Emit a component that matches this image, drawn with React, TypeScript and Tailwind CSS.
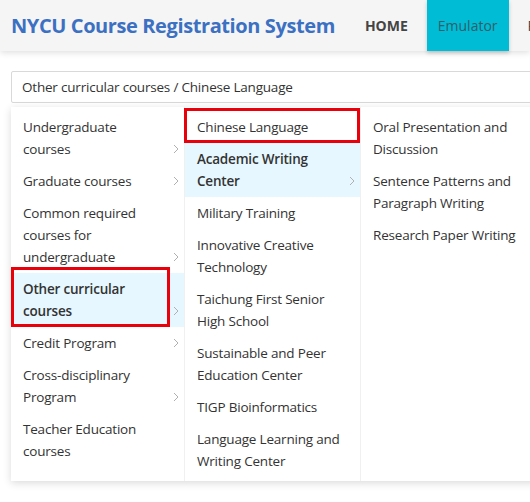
import React from 'react';

type Item = { lines: string[]; arrow?: boolean; active?: boolean; bold?: boolean; mark?: 'col1' | 'col2' };

const col1: Item[] = [
  { lines: ['Undergraduate', 'courses'], arrow: true },
  { lines: ['Graduate courses'], arrow: true },
  { lines: ['Common required', 'courses for', 'undergraduate'], arrow: true },
  { lines: ['Other curricular', 'courses'], arrow: true, active: true, bold: true, mark: 'col1' },
  { lines: ['Credit Program'], arrow: true },
  { lines: ['Cross-disciplinary', 'Program'], arrow: true },
  { lines: ['Teacher Education', 'courses'] },
];

const col2: Item[] = [
  { lines: ['Chinese Language'], mark: 'col2' },
  { lines: ['Academic Writing', 'Center'], arrow: true, active: true, bold: true },
  { lines: ['Military Training'] },
  { lines: ['Innovative Creative', 'Technology'] },
  { lines: ['Taichung First Senior', 'High School'] },
  { lines: ['Sustainable and Peer', 'Education Center'] },
  { lines: ['TIGP Bioinformatics'] },
  { lines: ['Language Learning and', 'Writing Center'] },
];

const col3: Item[] = [
  { lines: ['Oral Presentation and', 'Discussion'] },
  { lines: ['Sentence Patterns and', 'Paragraph Writing'] },
  { lines: ['Research Paper Writing'] },
];

const Chevron = () => (
  <svg width="6" height="10" viewBox="0 0 6 10" className="mb-[6px] shrink-0">
    <path d="M1 1l4 4-4 4" fill="none" stroke="#b0b0b0" strokeWidth="1" />
  </svg>
);

const Column = ({ items, width, border }: { items: Item[]; width: string; border?: boolean }) => (
  <ul className={`${width} ${border ? 'border-r border-[#f0f0f0]' : ''} py-[4px] shrink-0`}>
    {items.map((it) => (
      <li
        key={it.lines.join(' ')}
        className={`relative flex items-end justify-between pl-[12px] pr-[5px] py-[5px] leading-[22px] text-[13.5px] tracking-[-0.2px] text-[#333] ${
          it.active ? 'bg-[#e6f7ff]' : ''
        } ${it.bold ? 'font-semibold' : ''}`}
      >
        <span className="whitespace-nowrap">
          {it.lines.map((l, i) => (
            <React.Fragment key={i}>
              {i > 0 && <br />}
              {l}
            </React.Fragment>
          ))}
        </span>
        {it.arrow && <Chevron />}
        {it.mark === 'col1' && (
          <div className="absolute left-0 top-[-6px] w-[159px] h-[60px] border-[3px] border-[#e8000b]" />
        )}
        {it.mark === 'col2' && (
          <div className="absolute left-[-1px] top-[-3px] w-[176px] h-[35px] border-[3px] border-[#e8000b]" />
        )}
      </li>
    ))}
  </ul>
);

export default function App() {
  return (
    <div
      className="w-[530px] h-[502px] overflow-hidden bg-white"
      style={{ fontFamily: '"Open Sans", "Noto Sans", sans-serif' }}
    >
      <header className="h-[51px] bg-[#f5f5f5] shadow-[0_2px_6px_rgba(0,0,0,0.12)] flex items-center pl-[11px] relative z-10">
        <h1 className="text-[20px] font-bold text-[#3b70c2] whitespace-nowrap tracking-[-0.4px]">
          NYCU Course Registration System
        </h1>
        <nav className="flex h-full items-center ml-[30px] text-[14px] whitespace-nowrap">
          <span className="font-bold text-[#444] mr-[19px]">HOME</span>
          <span className="h-full flex items-center px-[11px] bg-[#00bcd4] text-[#2d5f6c] shadow-[0_2px_4px_rgba(0,0,0,0.2)]">
            Emulator
          </span>
          <span className="text-[#444] ml-[19px]">Records</span>
        </nav>
      </header>

      <main className="pl-[11px] pt-[20px]">
        <div className="w-[540px] h-[32px] border border-[#d9d9d9] rounded-[2px] flex items-center px-[10px] text-[13.5px] tracking-[-0.2px] text-[#333]">
          Other curricular courses / Chinese Language
        </div>

        <div className="mt-[4px] flex w-[540px] bg-white shadow-[0_2px_8px_rgba(0,0,0,0.15)]">
          <Column items={col1} width="w-[174px]" border />
          <Column items={col2} width="w-[176px]" border />
          <Column items={col3} width="w-[190px]" />
        </div>
      </main>
    </div>
  );
}
